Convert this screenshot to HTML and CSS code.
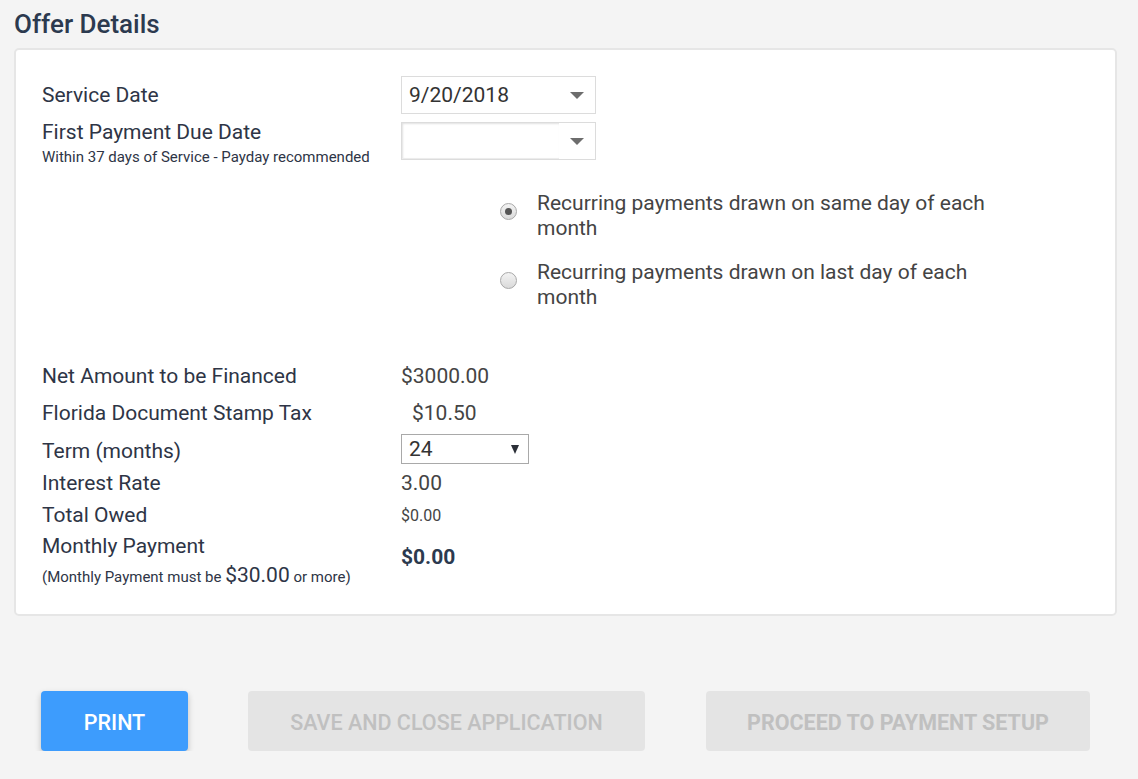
FILE: index.html
```html
<!DOCTYPE html>
<html>
<head>
<meta charset="utf-8">
<link rel="stylesheet" href="styles.css">
</head>
<body>
<div class="page">
  <h1 class="title">Offer Details</h1>
  <section class="card">
    <div class="row row-service">
      <div class="label">Service Date</div>
      <div class="value">
        <div class="combo">
          <span class="combo-text">9/20/2018</span>
          <span class="combo-arrow"></span>
        </div>
      </div>
    </div>
    <div class="row row-first">
      <div class="label">
        <div class="label-main">First Payment Due Date</div>
        <div class="label-sub">Within 37 days of Service - Payday recommended</div>
      </div>
      <div class="value">
        <div class="combo combo-empty">
          <span class="combo-input"></span>
          <span class="combo-arrow"></span>
        </div>
      </div>
    </div>
    <div class="radios">
      <label class="radio">
        <span class="radio-dot checked"></span>
        <span class="radio-text">Recurring payments drawn on same day of each month</span>
      </label>
      <label class="radio">
        <span class="radio-dot"></span>
        <span class="radio-text">Recurring payments drawn on last day of each month</span>
      </label>
    </div>
    <div class="row row-net">
      <div class="label">Net Amount to be Financed</div>
      <div class="value val-gray">$3000.00</div>
    </div>
    <div class="row row-tax">
      <div class="label">Florida Document Stamp Tax</div>
      <div class="value val-gray val-indent">$10.50</div>
    </div>
    <div class="row row-term">
      <div class="label">Term (months)</div>
      <div class="value">
        <div class="select">
          <span>24</span>
          <span class="select-arrow"></span>
        </div>
      </div>
    </div>
    <div class="row row-rate">
      <div class="label">Interest Rate</div>
      <div class="value val-gray">3.00</div>
    </div>
    <div class="row row-total">
      <div class="label">Total Owed</div>
      <div class="value val-gray val-small">$0.00</div>
    </div>
    <div class="row row-monthly">
      <div class="label">
        <div class="label-main">Monthly Payment</div>
        <div class="label-note">(Monthly Payment must be <span class="big">$30.00</span> or more)</div>
      </div>
      <div class="value val-bold">$0.00</div>
    </div>
  </section>
  <div class="actions">
    <button class="btn btn-print">PRINT</button>
    <button class="btn btn-disabled btn-save">SAVE AND CLOSE APPLICATION</button>
    <button class="btn btn-disabled btn-proceed">PROCEED TO PAYMENT SETUP</button>
  </div>
</div>
</body>
</html>
```

FILE: styles.css
```css
html, body {
  margin: 0;
  padding: 0;
  background: #f4f4f4;
}
body {
  font-family: Roboto, "Liberation Sans", sans-serif;
  color: #2e3546;
}
.page {
  padding: 0 21px 0 14px;
}
.title {
  margin: 8px 0 8px;
  font-size: 26px;
  line-height: 32px;
  font-weight: 500;
  color: #2c3a4f;
}
.card {
  box-sizing: border-box;
  width: 1103px;
  background: #fff;
  border: 2px solid #e6e6e6;
  border-radius: 5px;
  padding: 26px 26px 25px 26px;
}
.row {
  display: flex;
  align-items: center;
}
.label {
  width: 359px;
  flex: none;
  font-size: 21px;
  line-height: 24px;
  color: #2e3546;
}
.value {
  font-size: 21px;
  color: #444;
}
.row-service { height: 38px; }
.row-first {
  margin-top: 8px;
  align-items: flex-start;
}
.row-first .label-main {
  line-height: 20px;
}
.label-sub {
  margin-top: 6px;
  font-size: 15px;
  line-height: 18px;
  color: #2e3546;
}
.combo {
  box-sizing: border-box;
  width: 195px;
  height: 38px;
  border: 1px solid #dcdcdc;
  display: flex;
  align-items: center;
  position: relative;
}
.combo-text {
  padding-left: 7px;
  font-size: 21px;
  color: #333;
  flex: 1;
}
.combo-arrow {
  width: 0;
  height: 0;
  border-left: 7px solid transparent;
  border-right: 7px solid transparent;
  border-top: 7px solid #6d6d6d;
  margin-right: 11px;
}
.combo-input {
  align-self: stretch;
  width: 157px;
  box-shadow: inset 1px 1px 2px rgba(0,0,0,0.12);
  border-bottom: 1px solid #ececec;
  margin-right: 9px;
}
.combo-empty .combo-arrow { margin-left: auto; }

.radios {
  margin: 25px 0 0 458px;
  display: flex;
  flex-direction: column;
  gap: 19px;
}
.radio {
  display: flex;
  align-items: flex-start;
}
.radio-dot {
  box-sizing: border-box;
  flex: none;
  width: 17px;
  height: 17px;
  margin-top: 12px;
  margin-right: 20px;
  border-radius: 50%;
  border: 1px solid #a8a8a8;
  background: linear-gradient(#f3f3f3, #dadada);
  position: relative;
}
.radio-dot.checked::after {
  content: "";
  position: absolute;
  left: 4px;
  top: 4px;
  width: 7px;
  height: 7px;
  border-radius: 50%;
  background: #555;
}
.radio-text {
  width: 460px;
  font-size: 21px;
  line-height: 25px;
  color: #444;
}

.row-net { margin-top: 48px; height: 36px; }
.row-tax { height: 38px; }
.row-term { height: 34px; }
.row-term .label { padding-top: 3px; }
.row-rate { height: 33px; }
.row-total { height: 32px; }
.row-monthly {
  align-items: flex-start;
  padding-top: 4px;
}
.val-indent { padding-left: 11px; }
.val-small { font-size: 16px; }
.val-bold {
  font-weight: 700;
  font-size: 21px;
  line-height: 24px;
  color: #2c3a4f;
  margin-top: 10px;
}
.row-monthly .label-main {
  line-height: 22px;
}
.label-note {
  margin-top: 6px;
  font-size: 15px;
  line-height: 24px;
  color: #2e3546;
}
.label-note .big {
  font-size: 21px;
}

.select {
  box-sizing: border-box;
  width: 128px;
  height: 30px;
  border: 1px solid #a9a9a9;
  display: flex;
  align-items: center;
  justify-content: space-between;
  padding: 0 9px 0 7px;
  font-size: 21px;
  color: #333;
}
.select-arrow {
  width: 0;
  height: 0;
  border-left: 4.5px solid transparent;
  border-right: 4.5px solid transparent;
  border-top: 9px solid #2b2f38;
}

.actions {
  display: flex;
  gap: 60px;
  margin: 75px 0 0 27px;
}
.btn {
  height: 60px;
  border: none;
  border-radius: 4px;
  font-family: Roboto, "Liberation Sans", sans-serif;
  font-size: 21.5px;
  font-weight: 500;
  padding: 3px 0 0;
  cursor: pointer;
}
.btn-print {
  width: 147px;
  background: #3d9cfd;
  color: #fff;
  box-shadow: 0 3px 6px rgba(0,0,0,0.22);
}
.btn-disabled {
  background: #e4e4e4;
  color: #c0c0c0;
}
.btn-save { width: 397px; }
.btn-proceed {
  width: 384px;
  margin-left: 1px;
  font-weight: 700;
}
```
